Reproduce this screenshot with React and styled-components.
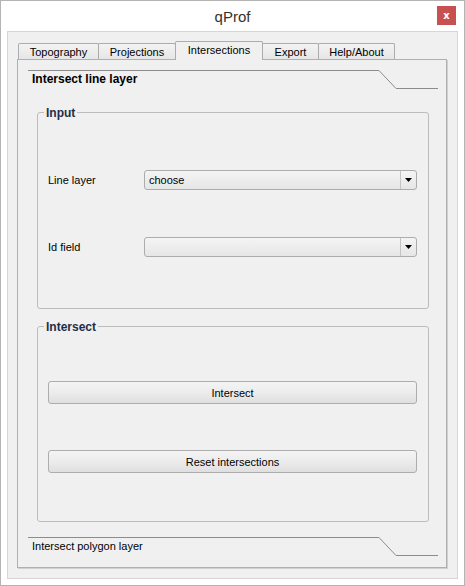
import React from "react";
import styled, { createGlobalStyle } from "styled-components";

const Global = createGlobalStyle`
  html, body { margin: 0; padding: 0; background: #ffffff; }
  body { font-family: "Liberation Sans", Arial, sans-serif; font-size: 11px; color: #000; }
  * { box-sizing: border-box; }
`;

const Window = styled.div`
  width: 465px;
  height: 586px;
  border: 1px solid #b4b4b4;
  background: #ffffff;
  display: flex;
  flex-direction: column;
  padding: 0 6px 6px 6px;
`;

const TitleBar = styled.div`
  height: 30px;
  display: grid;
  grid-template-columns: 1fr auto 1fr;
  align-items: center;
`;

const Title = styled.div`
  grid-column: 2;
  font-family: "Liberation Sans", Arial, sans-serif;
  font-size: 15px;
  color: #333030;
  padding-top: 1px;
`;

const CloseButton = styled.div`
  grid-column: 3;
  justify-self: end;
  align-self: start;
  margin-top: 5px;
  margin-right: 2px;
  width: 19px;
  height: 19px;
  background: #c75050;
  color: #fff;
  font-family: "DejaVu Sans", sans-serif;
  font-weight: bold;
  font-size: 10px;
  display: flex;
  align-items: center;
  justify-content: center;
  line-height: 1;
`;

const Client = styled.div`
  flex: 1;
  border: 1px solid #d6d6d6;
  background: #f0f0f0;
  padding: 9px 10px 10px 9px;
  display: flex;
  flex-direction: column;
`;

const TabBar = styled.div`
  display: flex;
  align-items: flex-end;
  padding-left: 1px;
  height: 18px;
`;

const Tab = styled.div`
  position: relative;
  width: ${(p) => p.$w}px;
  height: ${(p) => (p.$active ? 19 : 16)}px;
  margin-bottom: ${(p) => (p.$active ? -1 : 0)}px;
  border: 1px solid #acacac;
  border-bottom: none;
  border-radius: 2px 2px 0 0;
  background: ${(p) =>
    p.$active ? "#f0f0f0" : "linear-gradient(#f3f3f3, #e6e6e6)"};
  z-index: ${(p) => (p.$active ? 2 : 1)};
  display: flex;
  align-items: center;
  justify-content: center;
  font-size: 11px;
  color: #000;
  padding-bottom: ${(p) => (p.$active ? 2 : 0)}px;
  & + & { margin-left: -1px; }
`;

const Pane = styled.div`
  flex: 1;
  border: 1px solid #b0b0b0;
  box-shadow: 1px 1px 0 #d0d0d0;
  background: #f0f0f0;
  padding: 10px 8px 11px 10px;
  display: flex;
  flex-direction: column;
`;

const SectionHeader = styled.div`
  display: flex;
  height: 19px;
`;

const HeaderLabel = styled.div`
  flex: 1;
  border-top: 1px solid #8c8c8c;
  padding-left: 4px;
  line-height: 17px;
  font-weight: ${(p) => (p.$bold ? "bold" : "normal")};
  font-size: ${(p) => (p.$bold ? 12 : 11)}px;
  color: #000;
`;

const Slant = styled.svg`
  width: 17px;
  height: 19px;
  flex: none;
  display: block;
`;

const HeaderTail = styled.div`
  width: 42px;
  border-bottom: 1px solid #8c8c8c;
`;

const Body = styled.div`
  flex: 1;
  padding: 23px 9px 15px 9px;
  display: flex;
  flex-direction: column;
  gap: 17px;
`;

const Group = styled.div`
  position: relative;
  height: ${(p) => p.$h}px;
  border: 1px solid #bcbcbc;
  border-radius: 3px;
  padding: ${(p) => p.$pt}px 11px 0 10px;
  display: flex;
  flex-direction: column;
  gap: ${(p) => p.$gap}px;
`;

const Legend = styled.div`
  position: absolute;
  top: -7px;
  left: 6px;
  padding: 0 2px;
  background: #f0f0f0;
  font-weight: bold;
  font-size: 12px;
  line-height: 14px;
  color: #1f2e48;
`;

const FormRow = styled.div`
  display: grid;
  grid-template-columns: 96px 1fr;
  align-items: center;
`;

const Label = styled.div`
  font-size: 11px;
  color: #000;
`;

const Combo = styled.div`
  height: 20px;
  border: 1px solid #acacac;
  border-radius: 3px;
  background: linear-gradient(#f4f4f4, #e6e6e6);
  display: flex;
  align-items: stretch;
`;

const ComboText = styled.div`
  flex: 1;
  padding-left: 4px;
  display: flex;
  align-items: center;
  font-size: 11px;
`;

const ComboArrow = styled.div`
  width: 16px;
  border-left: 1px solid #c4c4c4;
  display: flex;
  align-items: center;
  justify-content: center;
`;

const Button = styled.div`
  height: 23px;
  border: 1px solid #adadad;
  border-radius: 3px;
  background: linear-gradient(#f4f4f4 0%, #ececec 50%, #dfdfdf 100%);
  display: flex;
  align-items: center;
  justify-content: center;
  font-size: 11px;
  color: #000;
`;

const tabs = [
  { name: "Topography", w: 81 },
  { name: "Projections", w: 78 },
  { name: "Intersections", w: 88 },
  { name: "Export", w: 57 },
  { name: "Help/About", w: 77 },
];

function Header({ text, bold }) {
  return (
    <SectionHeader>
      <HeaderLabel $bold={bold}>{text}</HeaderLabel>
      <Slant viewBox="0 0 17 19">
        <path d="M0 0.5 L17 18.5" stroke="#8c8c8c" strokeWidth="1" fill="none" />
      </Slant>
      <HeaderTail />
    </SectionHeader>
  );
}

function ComboBox({ value }) {
  return (
    <Combo>
      <ComboText>{value}</ComboText>
      <ComboArrow>
        <svg width="7" height="4" viewBox="0 0 7 4">
          <path d="M0 0 H7 L3.5 4 Z" fill="#000" />
        </svg>
      </ComboArrow>
    </Combo>
  );
}

export default function App() {
  return (
    <>
      <Global />
      <Window>
        <TitleBar>
          <Title>qProf</Title>
          <CloseButton>x</CloseButton>
        </TitleBar>
        <Client>
          <TabBar>
            {tabs.map((t) => (
              <Tab key={t.name} $w={t.w} $active={t.name === "Intersections"}>
                {t.name}
              </Tab>
            ))}
          </TabBar>
          <Pane>
            <Header text="Intersect line layer" bold />
            <Body>
              <Group $h={197} $pt={57} $gap={47}>
                <Legend>Input</Legend>
                <FormRow>
                  <Label>Line layer</Label>
                  <ComboBox value="choose" />
                </FormRow>
                <FormRow>
                  <Label>Id field</Label>
                  <ComboBox value="" />
                </FormRow>
              </Group>
              <Group $h={196} $pt={54} $gap={46}>
                <Legend>Intersect</Legend>
                <Button>Intersect</Button>
                <Button>Reset intersections</Button>
              </Group>
            </Body>
            <Header text="Intersect polygon layer" />
          </Pane>
        </Client>
      </Window>
    </>
  );
}
